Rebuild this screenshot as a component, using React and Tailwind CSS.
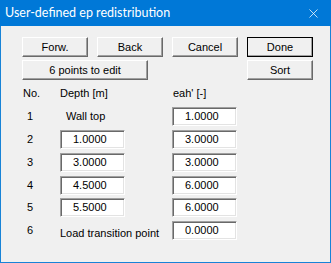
import { X } from 'lucide-react';

const btn =
  'h-[20px] flex items-center justify-center bg-[#f0f0f0] border border-t-white border-l-white border-r-[#696969] border-b-[#696969] shadow-[inset_-1px_-1px_0_#a0a0a0] text-[11px] text-black';

const rows = [
  { no: '1', depth: 'Wall top', eah: '1.0000', h: 'h-[23px]' },
  { no: '2', depth: '1.0000', eah: '3.0000', h: 'h-[23px]' },
  { no: '3', depth: '3.0000', eah: '3.0000', h: 'h-[23px]' },
  { no: '4', depth: '4.5000', eah: '6.0000', h: 'h-[22px]' },
  { no: '5', depth: '5.5000', eah: '6.0000', h: 'h-[23px]' },
  { no: '6', depth: 'Load transition point', eah: '0.0000', h: 'h-[23px]' },
];

function Field({ value }) {
  return (
    <div className="w-[65px] h-[19px] flex items-center pl-[12px] bg-white border border-t-[#a0a0a0] border-l-[#a0a0a0] border-r-white border-b-white shadow-[inset_1px_1px_0_#696969,inset_-1px_-1px_0_#e3e3e3] text-[11px] text-black">
      {value}
    </div>
  );
}

export default function App() {
  return (
    <div
      className="w-[331px] h-[263px] flex flex-col bg-[#f0f0f0] border border-t-0 border-[#1883d7]"
      style={{ fontFamily: '"Liberation Sans", Arial, sans-serif' }}
    >
      {/* Title bar */}
      <div className="h-[26px] -mx-px flex items-center justify-between bg-[#0078d7] text-white pl-[5px] pr-[6px]">
        <span className="text-[12.5px]" style={{ fontFamily: 'Lato, "Noto Sans", sans-serif' }}>
          User-defined ep redistribution
        </span>
        <X size={15} strokeWidth={1.2} className="mr-[4px]" />
      </div>

      <div className="flex flex-col pl-[21px] pt-[11px]">
        <div className="flex gap-[9px]">
          <div className={`${btn} w-[66px]`}>Forw.</div>
          <div className={`${btn} w-[66px]`}>Back</div>
          <div className={`${btn} w-[66px]`}>Cancel</div>
          <div className={`${btn} w-[66px] outline outline-1 outline-black -outline-offset-1`}>Done</div>
        </div>
        <div className="flex mt-[3px]">
          <div className={`${btn} w-[126px]`}>6 points to edit</div>
          <div className={`${btn} w-[66px] ml-[99px]`}>Sort</div>
        </div>

        <div className="h-[27px] flex items-center text-[11px] text-black">
          <span className="w-[38px] pl-px">No.</span>
          <span className="w-[112px]">Depth [m]</span>
          <span className="pl-px">eah' [-]</span>
        </div>

        {rows.map((r) => (
          <div key={r.no} className={`${r.h} flex items-start text-[11px] text-black`}>
            <span className="w-[38px] pl-[5px] h-[19px] flex items-center">{r.no}</span>
            <div className="w-[112px]">
              {r.no === '1' ? (
                <span className="h-[19px] flex items-center pl-[6px]">{r.depth}</span>
              ) : r.no === '6' ? (
                <span className="h-[19px] flex items-center pt-[5px]">{r.depth}</span>
              ) : (
                <Field value={r.depth} />
              )}
            </div>
            <Field value={r.eah} />
          </div>
        ))}
      </div>
    </div>
  );
}
